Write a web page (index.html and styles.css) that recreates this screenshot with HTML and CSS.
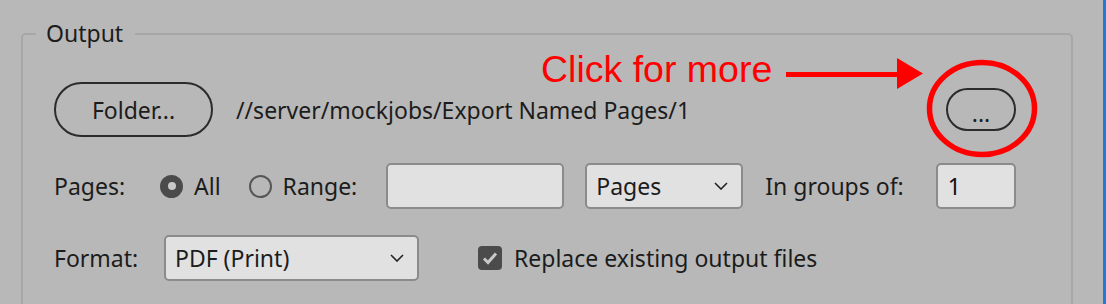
FILE: index.html
```html
<!DOCTYPE html>
<html lang="en">
<head>
    <meta charset="UTF-8">
    <title>Export Output</title>
    <link rel="stylesheet" href="styles.css">
</head>
<body>
    <div class="window">
        <fieldset class="output">
            <legend>Output</legend>

            <div class="row">
                <button class="pill folder">Folder...</button>
                <span class="path">//server/mockjobs/Export Named Pages/1</span>
                <button class="pill more">...</button>
            </div>

            <div class="row">
                <span class="label">Pages:</span>
                <span class="radio checked"></span>
                <span class="radio-text all">All</span>
                <span class="radio"></span>
                <span class="radio-text">Range:</span>
                <input type="text" class="field range">
                <div class="select pages-unit">
                    <span>Pages</span>
                    <svg width="14" height="8" viewBox="0 0 14 8"><path d="M1 1 L7 7 L13 1" fill="none" stroke="#222" stroke-width="1.6"/></svg>
                </div>
                <span class="groups">In groups of:</span>
                <input type="text" class="field group-size" value="1">
            </div>

            <div class="row">
                <span class="label">Format:</span>
                <div class="select format">
                    <span>PDF (Print)</span>
                    <svg width="14" height="8" viewBox="0 0 14 8"><path d="M1 1 L7 7 L13 1" fill="none" stroke="#222" stroke-width="1.6"/></svg>
                </div>
                <span class="checkbox">
                    <svg width="16" height="14" viewBox="0 0 16 14"><path d="M2 7.5 L6 11.5 L14 2.5" fill="none" stroke="#c9c9c9" stroke-width="3"/></svg>
                </span>
                <span class="check-text">Replace existing output files</span>
            </div>
        </fieldset>
    </div>

    <!-- annotation drawn on top of the dialog -->
    <div class="note">Click for more</div>
    <svg class="marks" width="1106" height="304" viewBox="0 0 1106 304">
        <line x1="786" y1="74.5" x2="900" y2="74.5" stroke="#ff0000" stroke-width="5"/>
        <polygon points="897,58 923,73.5 897,89" fill="#ff0000"/>
        <ellipse cx="982" cy="108.5" rx="52.5" ry="46" fill="none" stroke="#ff0000" stroke-width="5.5"/>
    </svg>
</body>
</html>
```

FILE: styles.css
```css
body {
    margin: 0;
    background: #b8b8b8;
    font-family: "Noto Sans", "DejaVu Sans", sans-serif;
    font-size: 23px;
    color: #1c1c1c;
    width: 1106px;
    height: 304px;
    overflow: hidden;
    position: relative;
}
.window {
    height: 304px;
    border-right: 3px solid #1f7bd8;
    box-sizing: border-box;
    padding: 18px 30px 0 21px;
    overflow: hidden;
}
.output {
    margin: 0;
    border: 2px solid #a7a7a7;
    border-radius: 5px;
    padding: 33px 30px 40px 31px;
    height: 400px;
    box-sizing: border-box;
}
.output legend {
    padding: 0 12px 0 10px;
    margin-left: -18px;
    line-height: 31px;
}
.row {
    display: flex;
    align-items: center;
    margin-bottom: 26px;
    white-space: nowrap;
}
.pill {
    font-family: inherit;
    font-size: 23px;
    color: #1c1c1c;
    background: transparent;
    border: 2px solid #2b2b2b;
    border-radius: 30px;
    padding: 0;
}
.folder {
    width: 159px;
    height: 55px;
}
.path {
    margin-left: 23px;
}
.more {
    width: 70px;
    height: 43px;
    margin-left: auto;
    margin-right: 25px;
    line-height: 43px;
    padding-top: 2px;
}
.label {
    width: 106px;
    flex-shrink: 0;
}
.radio {
    width: 23px;
    height: 23px;
    flex-shrink: 0;
    border-radius: 50%;
    border: 2px solid #565656;
    box-sizing: border-box;
    position: relative;
}
.radio.checked {
    background: #4b4b4b;
    border-color: #4b4b4b;
}
.radio.checked::after {
    content: "";
    position: absolute;
    left: 5.5px;
    top: 5.5px;
    width: 8px;
    height: 8px;
    border-radius: 50%;
    background: #c9c9c9;
}
.radio-text {
    margin-left: 11px;
}
.radio-text.all {
    margin-right: 28px;
}
.field {
    height: 46px;
    flex-shrink: 0;
    box-sizing: border-box;
    background: #e1e1e1;
    border: 2px solid #8b8b8b;
    border-radius: 5px;
    font-family: inherit;
    font-size: 23px;
    color: #111;
    padding: 0 10px;
}
.range {
    width: 178px;
    margin-left: 29px;
}
.select {
    height: 46px;
    flex-shrink: 0;
    box-sizing: border-box;
    background: #e1e1e1;
    border: 2px solid #8b8b8b;
    border-radius: 5px;
    display: flex;
    align-items: center;
    justify-content: space-between;
    padding: 0 13px 0 9px;
}
.pages-unit {
    width: 158px;
    margin-left: 21px;
}
.groups {
    margin-left: 22px;
}
.group-size {
    width: 80px;
    margin-left: 32px;
}
.format {
    width: 255px;
    margin-left: 4px;
}
.checkbox {
    width: 24px;
    height: 24px;
    border-radius: 4px;
    background: #4b4b4b;
    margin-left: 59px;
    display: flex;
    align-items: center;
    justify-content: center;
}
.check-text {
    margin-left: 12px;
}
.note {
    position: absolute;
    left: 541px;
    top: 51px;
    font-family: "Liberation Sans", Arial, sans-serif;
    font-size: 37.5px;
    line-height: 37.5px;
    color: #ff0000;
}
.marks {
    position: absolute;
    left: 0;
    top: 0;
}
```
